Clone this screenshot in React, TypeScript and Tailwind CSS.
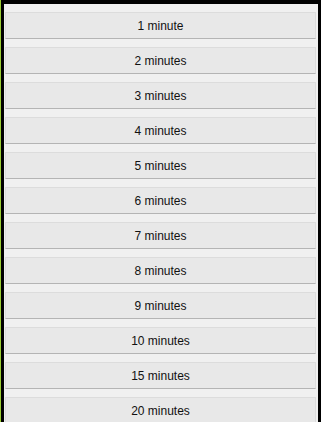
const durations = [
  '1 minute',
  '2 minutes',
  '3 minutes',
  '4 minutes',
  '5 minutes',
  '6 minutes',
  '7 minutes',
  '8 minutes',
  '9 minutes',
  '10 minutes',
  '15 minutes',
  '20 minutes',
];

const App = () => {
  return (
    <div className="w-[321px] h-[422px] overflow-hidden bg-[#9acd32] pl-px">
      <div className="h-full bg-black pt-[4px] px-[3px]">
        <div className="h-full bg-[#f0f0f0] pl-px pr-[2px] pt-[8px] flex flex-col gap-[8px] font-['Liberation_Sans',Arial,sans-serif]">
          {durations.map((label) => (
            <button
              key={label}
              className="h-[27px] shrink-0 w-full bg-[#e8e8e8] border border-[#dcdcdc] border-b-[#b4b4b4] text-[12px] text-[#111]"
            >
              {label}
            </button>
          ))}
        </div>
      </div>
    </div>
  );
};

export default App;
